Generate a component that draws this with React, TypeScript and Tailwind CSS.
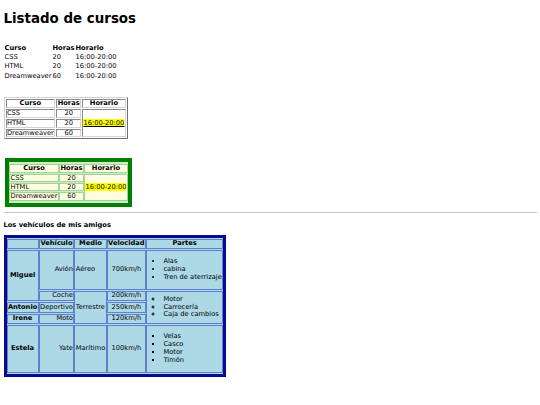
export default function App() {
  const cursos = [
    { nombre: 'CSS', horas: 20 },
    { nombre: 'HTML', horas: 20 },
    { nombre: 'Dreamweaver', horas: 60 },
  ]

  const plain = 'p-0'
  const gris = 'border border-t-[#8a8a8a] border-l-[#8a8a8a] border-r-[#d4d4d4] border-b-[#d4d4d4] px-[0.4px] py-0'
  const verde = 'border border-[#9ed69a] bg-[#ffffe0] px-[0.5px] py-0'
  const azul = 'border border-[#5f80cf] px-[0.4px] py-[0.4px]'

  return (
    <div className="min-h-[405px] bg-white px-[3.5px] pt-[4px] font-['DejaVu_Sans',sans-serif] text-[6.7px] leading-[7.8px] text-black">
      <h1 className="mt-[7px] text-[13.4px] font-bold leading-[15px]">Listado de cursos</h1>

      {/* tabla sin bordes */}
      <table className="mt-[16.5px] border-separate border-spacing-[1px] text-left leading-[8.4px]">
        <thead>
          <tr>
            <th className={`${plain} font-bold`}>Curso</th>
            <th className={`${plain} font-bold`}>Horas</th>
            <th className={`${plain} font-bold`}>Horario</th>
          </tr>
        </thead>
        <tbody>
          {cursos.map((c) => (
            <tr key={c.nombre}>
              <td className={plain}>{c.nombre}</td>
              <td className={plain}>{c.horas}</td>
              <td className={plain}>16:00-20:00</td>
            </tr>
          ))}
        </tbody>
      </table>

      {/* tabla con borde */}
      <table className="mt-[16px] border-separate border-spacing-[1px] border border-t-[#d4d4d4] border-l-[#d4d4d4] border-r-[#707070] border-b-[#707070] leading-[6.8px]">
        <thead>
          <tr>
            <th className={`${gris} text-center font-bold`}>Curso</th>
            <th className={`${gris} text-center font-bold`}>Horas</th>
            <th className={`${gris} text-center font-bold`}>Horario</th>
          </tr>
        </thead>
        <tbody>
          {cursos.map((c, i) => (
            <tr key={c.nombre}>
              <td className={gris}>{c.nombre}</td>
              <td className={`${gris} text-center`}>{c.horas}</td>
              {i === 0 && (
                <td rowSpan={3} className={`${gris} text-center`}>
                  <span className="bg-[#ffff00] underline">16:00-20:00</span>
                </td>
              )}
            </tr>
          ))}
        </tbody>
      </table>

      {/* tabla verde */}
      <table className="mt-[18.8px] ml-[1.5px] border-separate border-spacing-x-[0.5px] border-spacing-y-[1px] border-4 border-[#008000] bg-[#cfe9c9] px-0 py-[1px] leading-[6.4px]">
        <thead>
          <tr>
            <th className={`${verde} text-center font-bold`}>Curso</th>
            <th className={`${verde} text-center font-bold`}>Horas</th>
            <th className={`${verde} text-center font-bold`}>Horario</th>
          </tr>
        </thead>
        <tbody>
          {cursos.map((c, i) => (
            <tr key={c.nombre}>
              <td className={verde}>{c.nombre}</td>
              <td className={`${verde} text-center`}>{c.horas}</td>
              {i === 0 && (
                <td rowSpan={3} className={`${verde} text-center`}>
                  <span className="bg-[#ffff00]">16:00-20:00</span>
                </td>
              )}
            </tr>
          ))}
        </tbody>
      </table>

      <hr className="mt-[5px] border-t border-[#c8c8c8]" />

      <p className="mt-[8px] font-bold leading-[8px]">Los vehículos de mis amigos</p>

      {/* tabla de vehiculos */}
      <table className="mt-[6px] border-separate border-spacing-x-[0.8px] border-spacing-y-[1.9px] border-[3px] border-[#0a0a8c] bg-[#add8e6]">
        <thead>
          <tr>
            <th className={azul}></th>
            <th className={`${azul} font-bold`}>Vehículo</th>
            <th className={`${azul} font-bold`}>Medio</th>
            <th className={`${azul} font-bold`}>Velocidad</th>
            <th className={`${azul} font-bold`}>Partes</th>
          </tr>
        </thead>
        <tbody>
          <tr>
            <th rowSpan={2} className={`${azul} font-bold`}>Miguel</th>
            <td className={`${azul} text-right`}>Avión</td>
            <td className={`${azul} text-left`}>Aéreo</td>
            <td className={`${azul} text-center`}>700km/h</td>
            <td className={azul}>
              <ul className="my-[6.6px] list-disc pl-[16px]">
                <li>Alas</li>
                <li>cabina</li>
                <li>Tren de aterrizaje</li>
              </ul>
            </td>
          </tr>
          <tr>
            <td className={`${azul} text-right`}>Coche</td>
            <td rowSpan={3} className={`${azul} text-left`}>Terrestre</td>
            <td className={`${azul} text-center`}>200km/h</td>
            <td rowSpan={3} className={azul}>
              <ul className="my-0 list-[circle] pl-[16px]">
                <li>Motor</li>
                <li>Carrocería</li>
                <li>Caja de cambios</li>
              </ul>
            </td>
          </tr>
          <tr>
            <th className={`${azul} font-bold`}>Antonio</th>
            <td className={`${azul} text-right`}>Deportivo</td>
            <td className={`${azul} text-center`}>250km/h</td>
          </tr>
          <tr>
            <th className={`${azul} font-bold`}>Irene</th>
            <td className={`${azul} text-right`}>Moto</td>
            <td className={`${azul} text-center`}>120km/h</td>
          </tr>
          <tr>
            <th className={`${azul} font-bold`}>Estela</th>
            <td className={`${azul} text-right`}>Yate</td>
            <td className={`${azul} text-left`}>Marítimo</td>
            <td className={`${azul} text-center`}>100km/h</td>
            <td className={azul}>
              <ul className="my-[6.6px] list-[square] pl-[16px]">
                <li>Velas</li>
                <li>Casco</li>
                <li>Motor</li>
                <li>Timón</li>
              </ul>
            </td>
          </tr>
        </tbody>
      </table>
    </div>
  )
}
